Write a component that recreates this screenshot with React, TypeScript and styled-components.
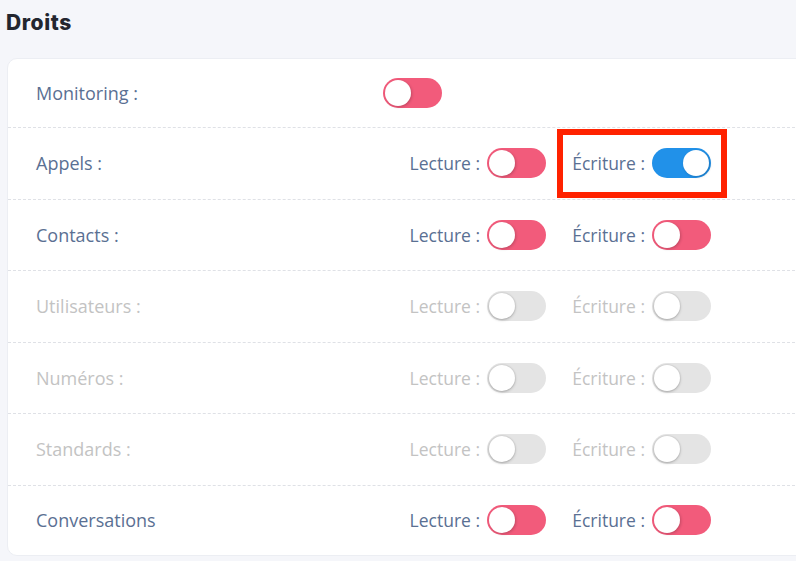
import * as React from 'react';
import styled, { createGlobalStyle } from 'styled-components';

const GlobalStyle = createGlobalStyle`
  html, body {
    margin: 0;
    padding: 0;
    background: #f5f6fa;
    overflow: hidden;
  }
  * {
    box-sizing: border-box;
  }
`;

const Page = styled.div`
  padding: 10px 0 0 7px;
  font-family: 'Open Sans', 'Noto Sans', sans-serif;
`;

const Title = styled.h2`
  margin: 0 0 0 -1px;
  font-family: Inter, 'Noto Sans', sans-serif;
  font-weight: 800;
  font-size: 21px;
  line-height: 26px;
  color: #23262f;
  letter-spacing: 0.6px;
`;

const Card = styled.div`
  margin-top: 22px;
  margin-right: -30px;
  background: #ffffff;
  border: 1px solid #eceef3;
  border-radius: 10px;
`;

const Row = styled.div`
  display: grid;
  grid-template-columns: 336px 163px 170px;
  column-gap: 11px;
  align-items: center;
  height: 71.5px;
  padding-left: 28px;
  border-top: 1px dashed #dfe1e6;

  &:first-child {
    border-top: none;
    height: 68px;
  }

  &:last-child {
    height: 70px;
  }
`;

const Label = styled.div<{ disabled?: boolean }>`
  font-size: 18px;
  color: ${(p) => (p.disabled ? '#c3c3c3' : '#5a7093')};
`;

const Group = styled.div<{ boxed?: boolean; highlighted?: boolean }>`
  display: flex;
  align-items: center;
  justify-content: flex-end;
  gap: 7px;
  height: 69px;
  padding: ${(p) => (p.boxed ? '0 10px' : '0')};
  border: ${(p) => (p.boxed ? 6 : 0)}px solid
    ${(p) => (p.highlighted ? '#ff2200' : 'transparent')};
`;

const GroupLabel = styled.span<{ disabled?: boolean }>`
  font-size: 17.5px;
  color: ${(p) => (p.disabled ? '#c3c3c3' : '#5a7093')};
  white-space: nowrap;
`;

type State = 'off' | 'on' | 'disabled';

const Track = styled.div<{ state: State }>`
  position: relative;
  width: 59px;
  height: 30px;
  border-radius: 15px;
  flex-shrink: 0;
  background: ${(p) =>
    p.state === 'on' ? '#2191e9' : p.state === 'off' ? '#f25b7b' : '#e4e4e4'};
`;

const Knob = styled.div<{ state: State }>`
  position: absolute;
  top: 2px;
  left: ${(p) => (p.state === 'on' ? '31px' : '2px')};
  width: 26px;
  height: 26px;
  border-radius: 50%;
  background: #ffffff;
  box-shadow: ${(p) =>
    p.state === 'disabled'
      ? '0 1px 3px rgba(0,0,0,0.25), 0 0 0 1px #dcdcdc'
      : '1px 1px 3px rgba(0,0,0,0.2)'};
`;

const Toggle: React.FC<{ state: State }> = ({ state }) => (
  <Track state={state}>
    <Knob state={state} />
  </Track>
);

type Perm = {
  name: string;
  read?: State;
  write?: State;
  single?: State;
  highlightWrite?: boolean;
};

const perms: Perm[] = [
  { name: 'Monitoring :', single: 'off' },
  { name: 'Appels :', read: 'off', write: 'on', highlightWrite: true },
  { name: 'Contacts :', read: 'off', write: 'off' },
  { name: 'Utilisateurs :', read: 'disabled', write: 'disabled' },
  { name: 'Numéros :', read: 'disabled', write: 'disabled' },
  { name: 'Standards :', read: 'disabled', write: 'disabled' },
  { name: 'Conversations', read: 'off', write: 'off' },
];

export default function App() {
  return (
    <Page>
      <GlobalStyle />
      <Title>Droits</Title>
      <Card>
        {perms.map((p) => {
          const disabled = p.read === 'disabled';
          return (
            <Row key={p.name}>
              <Label disabled={disabled}>{p.name}</Label>
              {p.single ? (
                <div>
                  <Toggle state={p.single} />
                </div>
              ) : (
                <>
                  <Group>
                    <GroupLabel disabled={disabled}>Lecture :</GroupLabel>
                    <Toggle state={p.read!} />
                  </Group>
                  <Group boxed highlighted={p.highlightWrite}>
                    <GroupLabel disabled={disabled}>Écriture :</GroupLabel>
                    <Toggle state={p.write!} />
                  </Group>
                </>
              )}
            </Row>
          );
        })}
      </Card>
    </Page>
  );
}
